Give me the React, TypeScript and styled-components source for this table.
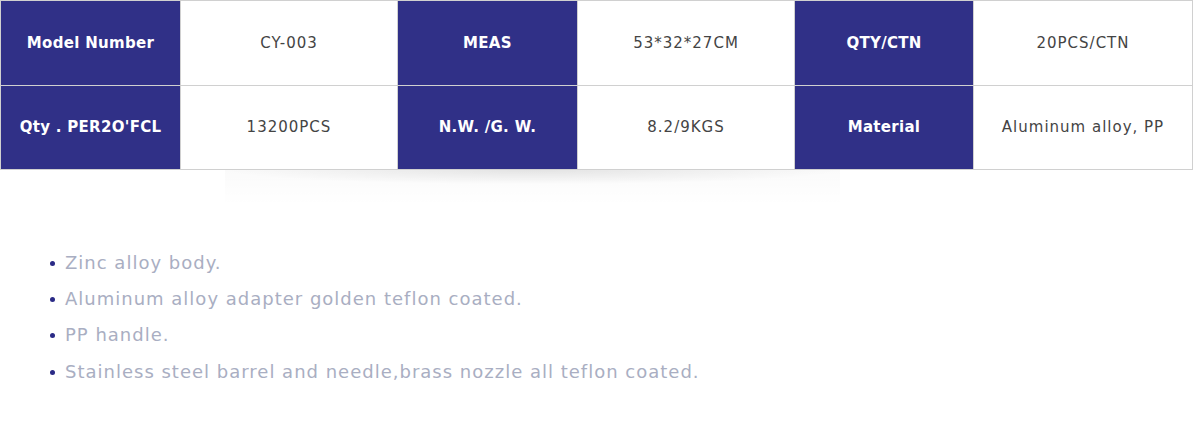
import React from 'react';
import styled, { createGlobalStyle } from 'styled-components';

const GlobalStyle = createGlobalStyle`
	body {
		margin: 0;
		background: #fff;
		font-family: "DejaVu Sans", "Open Sans", sans-serif;
	}
`;

interface ISpec {
	label: string;
	value: string;
};

const specRows: ISpec[][] = [
	[
		{ label: 'Model Number', value: 'CY-003' },
		{ label: 'MEAS', value: '53*32*27CM' },
		{ label: 'QTY/CTN', value: '20PCS/CTN' },
	],
	[
		{ label: "Qty . PER2O'FCL", value: '13200PCS' },
		{ label: 'N.W. /G. W.', value: '8.2/9KGS' },
		{ label: 'Material', value: 'Aluminum alloy, PP' },
	],
];

const features = [
	'Zinc alloy body.',
	'Aluminum alloy adapter golden teflon coated.',
	'PP handle.',
	'Stainless steel barrel and needle,brass nozzle all teflon coated.',
];

const colWidths = [180, 217, 180, 217, 179, 219];

const Page = styled.div`
	width: 1194px;
	height: 422px;
	overflow: hidden;
`;

const TableWrap = styled.div`
	position: relative;
	width: 1192px;

	/* soft shadow strip under the table */
	&::after {
		content: '';
		position: absolute;
		left: 225px;
		top: 100%;
		width: 615px;
		height: 36px;
		background:
			radial-gradient(ellipse 50% 40% at 50% 0%, rgba(0, 0, 0, 0.09), rgba(0, 0, 0, 0) 100%),
			linear-gradient(to bottom, rgba(0, 0, 0, 0.02), rgba(0, 0, 0, 0));
		pointer-events: none;
	}
`;

const SpecTable = styled.table`
	position: relative;
	z-index: 1;
	width: 1192px;
	border-collapse: collapse;
	table-layout: fixed;
	background: #fff;
`;

const Cell = styled.td<{ $head?: boolean }>`
	height: 83.5px;
	padding: 0;
	border: 1px solid #d0d0d0;
	text-align: center;
	vertical-align: middle;
	font-size: 15px;
	letter-spacing: ${(p) => (p.$head ? '0.3px' : '1px')};
	font-weight: ${(p) => (p.$head ? 600 : 400)};
	color: ${(p) => (p.$head ? '#ffffff' : '#444444')};
	background: ${(p) => (p.$head ? '#303087' : '#ffffff')};
`;

const FeatureList = styled.ul`
	list-style: none;
	margin: 0;
	padding: 74px 0 0 50px;
`;

const FeatureItem = styled.li`
	display: flex;
	align-items: center;
	height: 36.3px;
	font-size: 18px;
	letter-spacing: 1px;
	color: #a9aec2;

	&::before {
		content: '';
		width: 5px;
		height: 5px;
		border-radius: 50%;
		background: #2a2a86;
		margin: 2px 10px 0 0;
		flex-shrink: 0;
	}
`;

export default function App() {
	return (
		<Page>
			<GlobalStyle />
			<TableWrap>
				<SpecTable>
					<colgroup>
						{colWidths.map((w, i) => (
							<col key={i} style={{ width: w }} />
						))}
					</colgroup>
					<tbody>
						{specRows.map((row, ri) => (
							<tr key={ri}>
								{row.map((spec) => (
									<React.Fragment key={spec.label}>
										<Cell $head>{spec.label}</Cell>
										<Cell>{spec.value}</Cell>
									</React.Fragment>
								))}
							</tr>
						))}
					</tbody>
				</SpecTable>
			</TableWrap>
			<FeatureList>
				{features.map((f) => (
					<FeatureItem key={f}>{f}</FeatureItem>
				))}
			</FeatureList>
		</Page>
	);
}
